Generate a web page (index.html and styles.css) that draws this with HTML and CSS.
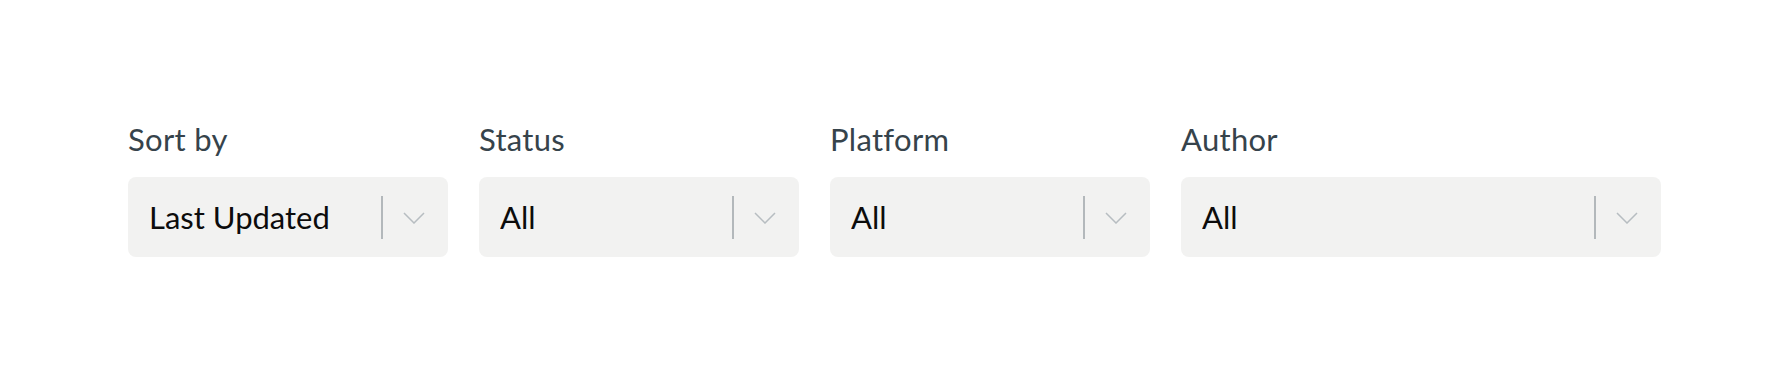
FILE: index.html
```html
<!DOCTYPE html>
<html lang="en">
<head>
<meta charset="utf-8">
<title>Filters</title>
<link rel="stylesheet" href="styles.css">
</head>
<body>
<div class="filters">
  <div class="field">
    <div class="label">Sort by</div>
    <div class="select">
      <span class="value">Last Updated</span>
      <span class="divider"></span>
      <svg class="chevron" width="22" height="12" viewBox="0 0 22 12"><path d="M1 1 L11 11 L21 1" fill="none" stroke="#b7bdc1" stroke-width="1.5"/></svg>
    </div>
  </div>
  <div class="field">
    <div class="label">Status</div>
    <div class="select">
      <span class="value">All</span>
      <span class="divider"></span>
      <svg class="chevron" width="22" height="12" viewBox="0 0 22 12"><path d="M1 1 L11 11 L21 1" fill="none" stroke="#b7bdc1" stroke-width="1.5"/></svg>
    </div>
  </div>
  <div class="field">
    <div class="label">Platform</div>
    <div class="select">
      <span class="value">All</span>
      <span class="divider"></span>
      <svg class="chevron" width="22" height="12" viewBox="0 0 22 12"><path d="M1 1 L11 11 L21 1" fill="none" stroke="#b7bdc1" stroke-width="1.5"/></svg>
    </div>
  </div>
  <div class="field">
    <div class="label">Author</div>
    <div class="select">
      <span class="value">All</span>
      <span class="divider"></span>
      <svg class="chevron" width="22" height="12" viewBox="0 0 22 12"><path d="M1 1 L11 11 L21 1" fill="none" stroke="#b7bdc1" stroke-width="1.5"/></svg>
    </div>
  </div>
</div>
</body>
</html>
```

FILE: styles.css
```css
html, body {
  margin: 0;
  padding: 0;
  background: #ffffff;
}

body {
  font-family: "Lato", "Liberation Sans", sans-serif;
}

.filters {
  display: grid;
  grid-template-columns: 1fr 1fr 1fr 1.5fr;
  column-gap: 31px;
  padding: 121px 128px 0;
}

.field {
  display: flex;
  flex-direction: column;
  min-width: 0;
}

.label {
  font-size: 31px;
  line-height: 36px;
  letter-spacing: 0.3px;
  color: #36434b;
  margin-bottom: 20px;
}

.select {
  display: flex;
  align-items: center;
  height: 80px;
  box-sizing: border-box;
  padding: 0 23px 0 21px;
  background: #f2f2f1;
  border-radius: 8px;
}

.value {
  flex: 1;
  font-size: 31px;
  line-height: 36px;
  color: #0c0c0c;
  white-space: nowrap;
  overflow: hidden;
}

.divider {
  width: 2px;
  height: 43px;
  background: #b3b8bb;
  margin-right: 20px;
}

.chevron {
  display: block;
  margin-top: 1px;
}
```
